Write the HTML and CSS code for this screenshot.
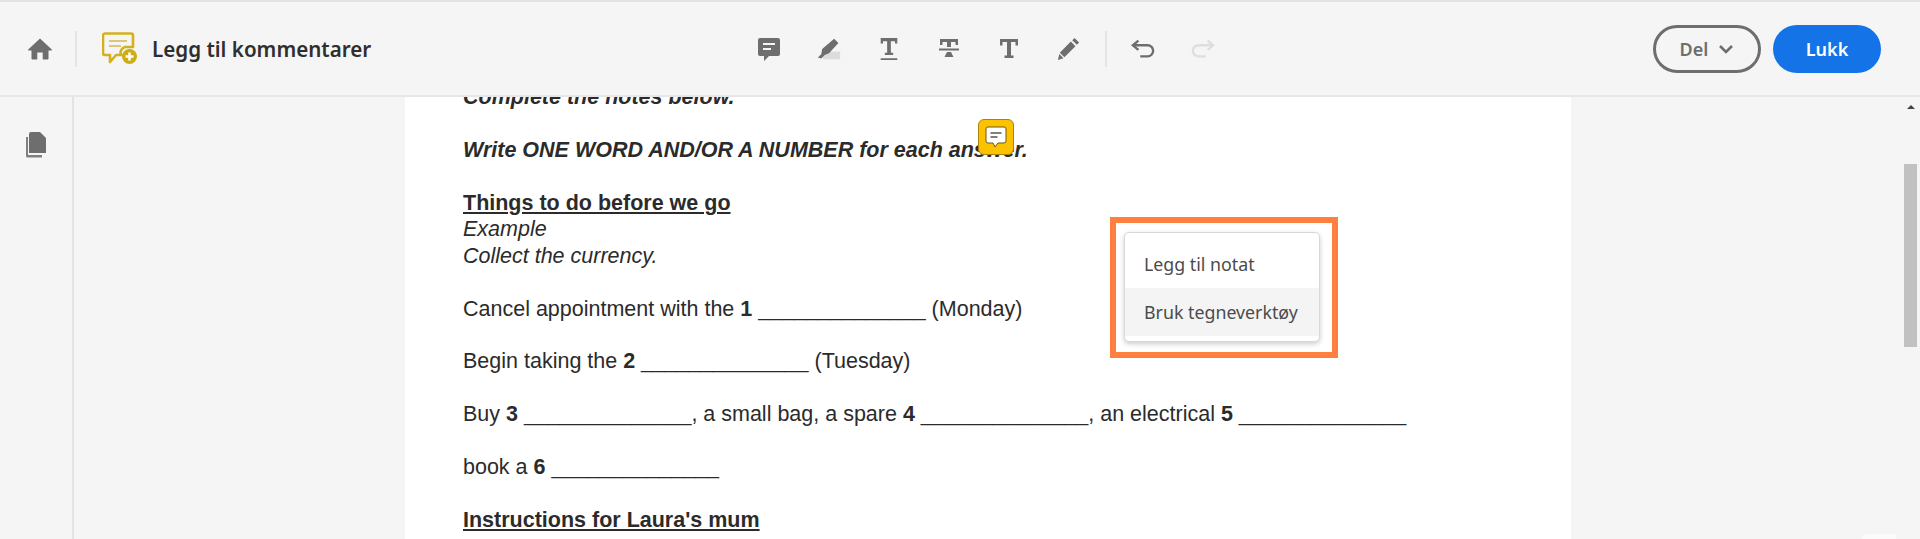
FILE: index.html
```html
<!DOCTYPE html>
<html lang="en">
<head>
    <meta charset="UTF-8">
    <title>Legg til kommentarer</title>
    <link rel="stylesheet" href="styles.css">
</head>
<body>
    <div class="app">
        <!-- Top bar -->
        <header class="topbar">
            <div class="topbar-left">
                <svg class="home-icon" viewBox="0 0 24 24"><path d="M12 1.500 .2 12.600c-.3.400 0 .9.400.9H3.500v8.200c0 .4.300.8.800.8h5v-7h5.400v7h5c.5 0 .8-.4.8-.8v-8.200h2.900c.4 0 .7-.5.4-.9Z"/></svg>
                <span class="divider"></span>
                <svg class="title-icon" viewBox="0 0 36 34">
                    <path d="M3 1.500h26a2 2 0 0 1 2 2V15h-8a6 6 0 0 0-4 8h-5l-6 7v-7H3a2 2 0 0 1-2-2V3.500a2 2 0 0 1 2-2Z" fill="none" stroke="#d4b020" stroke-width="2.600" stroke-linejoin="round"/>
                    <path d="M7 9h18M7 14h12" stroke="#e0c870" stroke-width="2"/>
                    <circle cx="27.500" cy="24.500" r="7.500" fill="#cdad12"/>
                    <path d="M27.500 20.500v8M23.500 24.500h8" stroke="#fff" stroke-width="2.600"/>
                </svg>
                <span class="title">Legg til kommentarer</span>
            </div>
            <div class="tools">
                <span class="tool"><svg viewBox="0 0 24 24"><path d="M3 1h18a2 2 0 0 1 2 2v14a2 2 0 0 1-2 2h-9l-5 5v-5H3a2 2 0 0 1-2-2V3a2 2 0 0 1 2-2Z"/><path d="M6 7h12M6 12h8" stroke="#f5f5f5" stroke-width="2"/></svg></span>
                <span class="tool"><svg viewBox="0 0 28 26"><rect x="7" y="16" width="20" height="9" fill="#dcdcdc"/><path d="M20 1l5 5-11 12-5 2-4 4-4-1 4-4 1-6Z"/></svg></span>
                <span class="tool"><svg viewBox="0 0 24 26"><path d="M3 1h18v6h-2.500V4.500H14V17h2.500v2.500h-9V17H10V4.500H5.500V7H3ZM3 23h18v2H3Z"/></svg></span>
                <span class="tool"><svg viewBox="0 0 24 24"><path d="M3 2h18v6h-2.500V5H14v5h-4V5H5.500v3H3ZM2 11.500h20v2H2ZM10 15h4l2.500 5h-9Z"/></svg></span>
                <span class="tool"><svg viewBox="0 0 24 24"><path d="M3 2h18v6.500h-2.500V5H14v13.500h2.500V21h-9v-2.500H10V5H5.500v3.500H3Z"/></svg></span>
                <span class="tool"><svg viewBox="0 0 24 26"><path d="M18 1l5 5-2.500 2.500-5-5ZM14 5l5 5L7 22l-5-5ZM1.500 18.500l4.500 4.500-6 2Z"/></svg></span>
                <span class="divider tool-divider"></span>
                <span class="tool"><svg class="line-icon" viewBox="0 0 26 22"><path d="M8 2 2 7l6 5"/><path d="M2 7h16a6 6 0 0 1 0 12h-8"/></svg></span>
                <span class="tool"><svg class="line-icon line-icon-off" viewBox="0 0 26 22"><path d="M18 2l6 5-6 5"/><path d="M24 7H8a6 6 0 0 0 0 12h8"/></svg></span>
            </div>
            <div class="topbar-right">
                <button class="btn-outline">Del <svg class="chevron" viewBox="0 0 16 10"><path d="M2 2l6 6 6-6" fill="none" stroke="#6e6e6e" stroke-width="2.600"/></svg></button>
                <button class="btn-primary">Lukk</button>
            </div>
        </header>

        <!-- Viewer -->
        <div class="main">
            <div class="sidebar">
                <svg class="pages-icon" viewBox="0 0 22 26"><path d="M6 0h9l6 6v15H4V2a2 2 0 0 1 2-2Z"/><path d="M1 5v19a1.500 1.500 0 0 0 1.500 1.500H17V23H3V5Z" fill="#808080"/></svg>
            </div>
            <div class="viewer">
                <div class="page">
                    <p class="cut"><b><i>Complete the notes below.</i></b></p>
                    <p class="gap"><b><i>Write ONE WORD AND/OR A NUMBER for each answer.</i></b></p>
                    <p class="gap"><b><u>Things to do before we go</u></b></p>
                    <p><i>Example</i></p>
                    <p><i>Collect the currency.</i></p>
                    <p class="gap">Cancel appointment with the <b>1</b> ______________ (Monday)</p>
                    <p class="gap">Begin taking the <b>2</b> ______________ (Tuesday)</p>
                    <p class="gap">Buy <b>3</b> ______________, a small bag, a spare <b>4</b> ______________, an electrical <b>5</b> ______________</p>
                    <p class="gap">book a <b>6</b> ______________</p>
                    <p class="gap"><b><u>Instructions for Laura's mum</u></b></p>
                </div>
            </div>
            <div class="scrollbar">
                <span class="scroll-up"></span>
                <span class="scroll-thumb"></span>
            </div>

            <!-- Things that lie over the page -->
            <div class="sticky-note">
                <svg viewBox="0 0 24 24"><path d="M4 2h16a2 2 0 0 1 2 2v12a2 2 0 0 1-2 2h-6l-3 4-2-4H4a2 2 0 0 1-2-2V4a2 2 0 0 1 2-2Z" fill="#fff" stroke="#6b5a10" stroke-width="1"/><path d="M6.500 8h11M6.500 12h7" stroke="#555" stroke-width="1.600"/></svg>
            </div>
            <div class="highlight-box">
                <ul class="menu">
                    <li>Legg til notat</li>
                    <li class="active">Bruk tegneverktøy</li>
                </ul>
            </div>
            <span class="corner-mark"></span>
        </div>
    </div>
</body>
</html>
```

FILE: styles.css
```css
* {
    margin: 0;
    padding: 0;
    box-sizing: border-box;
}

html, body {
    height: 100%;
    overflow: hidden;
}

body {
    font-family: "Noto Sans", "Open Sans", sans-serif;
    background-color: #f5f5f5;
    color: #333;
}

.app {
    display: flex;
    flex-direction: column;
    height: 100vh;
}

/* Top bar */
.topbar {
    height: 97px;
    flex-shrink: 0;
    display: grid;
    grid-template-columns: 739px auto 1fr;
    align-items: center;
    background-color: #f5f5f5;
    border-top: 2px solid #e3e3e3;
    border-bottom: 2px solid #e6e6e6;
}

.topbar-left {
    display: flex;
    align-items: center;
    padding-left: 28px;
}

.home-icon {
    width: 24px;
    height: 24px;
    fill: #6e6e6e;
}

.divider {
    width: 2px;
    height: 36px;
    background-color: #e4e4e4;
}

.topbar-left .divider {
    margin: 0 25px 0 23px;
}

.title-icon {
    width: 36px;
    height: 34px;
    margin-right: 14px;
}

.title {
    font-size: 20.600px;
    font-weight: 600;
    color: #2f2f2f;
}

.tools {
    display: flex;
    align-items: center;
}

.tool {
    width: 60px;
    height: 40px;
    display: flex;
    align-items: center;
    justify-content: center;
}

.tool svg {
    width: 24px;
    height: 24px;
    fill: #6e6e6e;
}

.tool .line-icon {
    fill: none;
    stroke: #6e6e6e;
    stroke-width: 2.600;
}

.tool .line-icon-off {
    stroke: #dedede;
}

.tool-divider {
    margin: 0 6px 0 6px;
}

.topbar-right {
    display: flex;
    justify-content: flex-end;
    gap: 12px;
    padding-right: 39px;
}

button {
    width: 108px;
    height: 48px;
    border-radius: 24px;
    font-family: inherit;
    font-size: 18px;
    font-weight: 600;
    cursor: pointer;
}

.btn-outline {
    display: flex;
    align-items: center;
    justify-content: center;
    gap: 10px;
    background: transparent;
    border: 3px solid #6e6e6e;
    color: #6e6e6e;
}

.chevron {
    width: 16px;
    height: 10px;
}

.btn-primary {
    background-color: #1473e6;
    border: none;
    color: #fff;
}

/* Viewer */
.main {
    flex: 1;
    min-height: 0;
    display: flex;
    position: relative;
    overflow: hidden;
}

.sidebar {
    width: 74px;
    flex-shrink: 0;
    padding: 35px 0 0 25px;
    border-right: 2px solid #e4e4e4;
}

.pages-icon {
    width: 22px;
    height: 26px;
    fill: #6e6e6e;
}

.viewer {
    flex: 1;
    padding-left: 331px;
}

.page {
    width: 1166px;
    height: 600px;
    margin-top: -13px;
    padding-left: 58px;
    background-color: #fff;
    font-family: "Liberation Sans", Arial, sans-serif;
    font-size: 21.500px;
    line-height: 26.450px;
    color: #2b2b2b;
}

.page .gap {
    margin-top: 26.450px;
}

.scrollbar {
    width: 15px;
    margin-right: 2px;
    flex-shrink: 0;
    display: flex;
    flex-direction: column;
    align-items: center;
}

.scroll-up {
    margin-top: 8px;
    border-left: 4px solid transparent;
    border-right: 4px solid transparent;
    border-bottom: 4px solid #444;
}

.scroll-thumb {
    width: 13px;
    height: 183px;
    margin-top: 55px;
    background-color: #c1c1c1;
}

.sticky-note {
    position: absolute;
    left: 978px;
    top: 22px;
    width: 36px;
    height: 36px;
    padding: 5px;
    border: 1px solid #a8860c;
    border-radius: 6px;
    background-color: #fcc200;
}

.sticky-note svg {
    display: block;
    width: 24px;
    height: 24px;
}

.highlight-box {
    position: absolute;
    left: 1110px;
    top: 120px;
    width: 228px;
    height: 141px;
    padding: 9px 12px 9px 8px;
    border: 6px solid #ff7f3f;
    background-color: #fff;
}

.menu {
    list-style: none;
    padding: 7px 0 5px;
    border: 1px solid #d8d8d8;
    border-radius: 5px;
    background-color: #fff;
    box-shadow: 0 2px 5px rgba(0, 0, 0, 0.2);
}

.menu li {
    height: 48px;
    line-height: 48px;
    padding-left: 19px;
    font-size: 17.800px;
    color: #4b4b4b;
}

.menu .active {
    background-color: #f4f4f4;
}

.corner-mark {
    position: absolute;
    left: 1862px;
    bottom: 0;
    width: 34px;
    height: 5px;
    border-radius: 8px 0 0 0;
    background-color: #fbfbfb;
}
```
